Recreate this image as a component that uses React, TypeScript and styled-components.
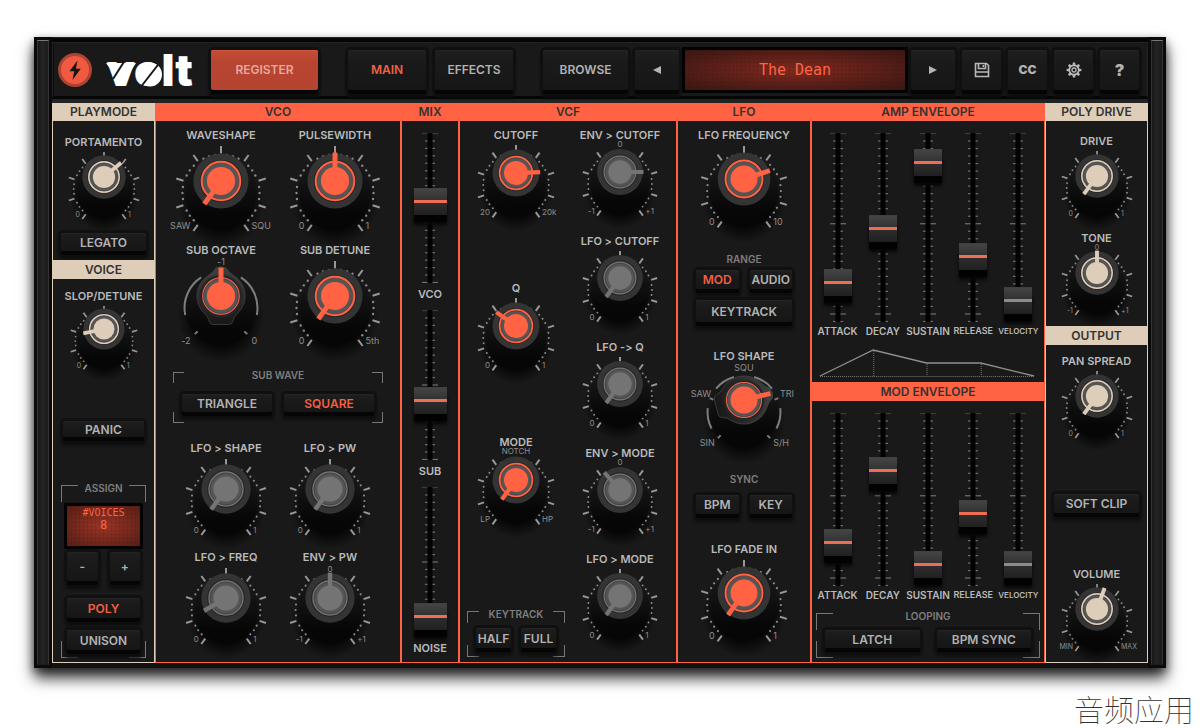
import React, { useId, useState } from 'react';
import styled, { createGlobalStyle } from 'styled-components';

const ORANGE = '#ff6344';
const CREAM = '#decdb9';
const GREY = '#747474';
const SURFACE = '#191919';

const GlobalStyle = createGlobalStyle`
  *, *::before, *::after { box-sizing: border-box; }
  body { margin: 0; background: #fff; font-family: Inter, "Liberation Sans", sans-serif; font-feature-settings: "calt" 0; }
  button, input, output { font-family: inherit; }
`;

/* ---------- page and frame ---------- */

const Page = styled.div`
  padding: 37px 34px 0;
`;

const Frame = styled.main`
  display: grid;
  grid-template-columns: 18px minmax(0, 1fr) 18px;
  background: #0a0a0a;
  box-shadow: 0 10px 14px 0 rgba(0, 0, 0, 0.8), 0 3px 8px rgba(0, 0, 0, 0.4);
`;

const Rail = styled.div`
  margin: 3px;
  border: 1px solid #343434;
  border-top-color: #777;
  border-bottom-color: #1c1c1c;
  background: linear-gradient(90deg, #171717, #242424 45%, #1b1b1b);
`;

const Body = styled.div`
  padding: 5px 0;
  background: linear-gradient(#222 0 1px, #050505 1px 5px, #232323 5px 66px, #111 66px);
`;

const Toolbar = styled.header`
  display: flex;
  align-items: center;
  gap: 30px;
  height: 57px;
  padding: 7px 8px 7px 5px;
  border: 1px solid #232323;
  border-bottom: 3px solid #060606;
  background: #191919;
  box-shadow: inset 1px 0 0 #0a0a0a;
`;

const ToolGroup = styled.div<{ $grow?: boolean }>`
  display: flex;
  gap: ${p => (p.$grow ? 7 : 9)}px;
  flex: ${p => (p.$grow ? '1 1 0' : 'none')};
  min-width: 0;
`;

const Brand = styled.h1`
  display: flex;
  align-items: center;
  gap: 14px;
  flex: none;
  width: 123px;
  margin: 0;
  > svg { flex: none; }
`;

const Panels = styled.div`
  display: grid;
  grid-template-columns: 103fr 246fr 58fr 218fr 134fr 234fr 103fr;
  margin-top: 4px;
`;

const Panel = styled.section<{ $accent: string }>`
  display: flex;
  flex-direction: column;
  min-width: 0;
  padding-bottom: 4px;
  border: solid ${p => p.$accent};
  border-width: 0 1px 1px;
  background: ${SURFACE};
`;

const Title = styled.h2<{ $accent: string; $sub?: boolean; $mt?: number }>`
  margin: ${p => p.$mt ?? 0}px 0 0;
  height: ${p => (p.$sub ? 19 : 18)}px;
  line-height: ${p => (p.$sub ? 19 : 18)}px;
  text-align: center;
  white-space: nowrap;
  font-size: 12px;
  font-weight: 600;
  color: #333;
  background: ${p => p.$accent};
`;

const Pair = styled.div<{ $cell: number; $mt?: number }>`
  display: grid;
  grid-template-columns: repeat(2, ${p => p.$cell}px);
  justify-content: center;
  margin-top: ${p => p.$mt ?? 0}px;
`;

const Column = styled.div<{ $gap?: number; $pt?: number }>`
  display: flex;
  flex-direction: column;
  gap: ${p => p.$gap ?? 0}px;
  padding-top: ${p => p.$pt ?? 0}px;
`;

const ButtonRow = styled.div<{ $gap: number; $mt?: number; $mx?: number }>`
  display: grid;
  grid-auto-flow: column;
  grid-auto-columns: minmax(0, 1fr);
  gap: ${p => p.$gap}px;
  margin: ${p => p.$mt ?? 0}px ${p => p.$mx ?? 0}px 0;
`;

/* ---------- buttons and displays ---------- */

const Button = styled.button<{
  $h?: number; $w?: number; $mt?: number; $mx?: number; $on?: boolean; $fill?: boolean;
}>`
  display: flex;
  align-items: center;
  justify-content: center;
  flex: none;
  width: ${p => (p.$w ? `${p.$w}px` : 'auto')};
  height: ${p => p.$h ?? 18}px;
  margin: ${p => p.$mt ?? 0}px ${p => p.$mx ?? 0}px 0;
  padding: 0;
  border: 0;
  border-radius: 2px;
  white-space: nowrap;
  font-size: 12px;
  font-weight: 600;
  color: ${p => (p.$fill ? '#e5aa9f' : p.$on ? '#f45f42' : '#b2b2b2')};
  background: ${p => (p.$fill
    ? 'linear-gradient(#c54c36, #b84531 30%, #b44330)'
    : 'linear-gradient(#1f1f1f, #1a1a1a 35%, #161616)')};
  box-shadow:
    inset 0 1px 0 ${p => (p.$fill ? '#d0573f' : '#242424')},
    0 4px 0 0 #050505,
    0 0 0 3px #101010,
    0 6px 3px 2px #0e0e0e;
  cursor: pointer;
`;

const Lcd = styled.output<{ $small?: boolean }>`
  display: flex;
  flex-direction: column;
  align-items: center;
  justify-content: ${p => (p.$small ? 'flex-start' : 'center')};
  flex: 1 1 auto;
  min-width: 0;
  height: 46px;
  margin: ${p => (p.$small ? '9px -3px 0' : '-3px -4px')};
  overflow: hidden;
  border: 3px solid #030303;
  border-radius: 1px;
  font-family: "DejaVu Sans Mono", "Liberation Mono", monospace;
  font-size: ${p => (p.$small ? 12 : 15)}px;
  line-height: ${p => (p.$small ? 13 : 18)}px;
  color: ${ORANGE};
  background:
    repeating-linear-gradient(90deg, rgba(0, 0, 0, 0.06) 0 1px, transparent 1px 4px),
    repeating-linear-gradient(rgba(0, 0, 0, 0.06) 0 1px, transparent 1px 4px),
    radial-gradient(ellipse at center, ${p => (p.$small ? '#9a3524, #571e15' : '#802a20, #3a1611')});
`;

const LcdLine = styled.span<{ $minor?: boolean }>`
  font-size: ${p => (p.$minor ? 10 : 12)}px;
`;

const Group = styled.div<{ $c: number; $mt?: number; $mx: number; $px: number; $pb: number }>`
  --c: ${p => p.$c}px;
  --line: linear-gradient(#777, #777);
  display: flex;
  flex-direction: column;
  margin: ${p => p.$mt ?? 0}px ${p => p.$mx}px 0;
  padding: 0 ${p => p.$px}px ${p => p.$pb}px;
  background:
    var(--line) left top / var(--c) 1px, var(--line) right top / var(--c) 1px,
    var(--line) left bottom / var(--c) 1px, var(--line) right bottom / var(--c) 1px,
    var(--line) left top / 1px var(--c), var(--line) right top / 1px var(--c),
    var(--line) left bottom / 1px var(--c), var(--line) right bottom / 1px var(--c);
  background-repeat: no-repeat;
`;

const Caption = styled.div<{ $mt?: number }>`
  margin-top: ${p => p.$mt ?? -3}px;
  line-height: 12px;
  text-align: center;
  white-space: nowrap;
  font-size: 10px;
  font-weight: 600;
  color: #7f7f7f;
`;

/* ---------- knobs ---------- */

const ControlLabel = styled.label<{ $size?: number }>`
  display: block;
  line-height: 16px;
  text-align: center;
  white-space: nowrap;
  font-size: ${p => p.$size ?? 11}px;
  font-weight: 600;
  color: #bababa;
`;

const KnobBox = styled.div<{ $mt?: number; $large: boolean }>`
  display: flex;
  flex-direction: column;
  align-items: center;
  gap: ${p => (p.$large ? 3 : 2)}px;
  margin-top: ${p => p.$mt ?? 0}px;
`;

const Layers = styled.div`
  display: grid;
  justify-items: center;
  > * { grid-area: 1 / 1; }
`;

const Dial = styled.svg`
  display: block;
  overflow: visible;
  text { font-family: Inter, "Liberation Sans", sans-serif; font-weight: 400; fill: #8e8e8e; }
`;

const DialInput = styled.input`
  width: 100%;
  height: 100%;
  margin: 0;
  opacity: 0;
  cursor: grab;
`;

const at = (r: number, deg: number) => {
  const a = (deg * Math.PI) / 180;
  return [r * Math.sin(a), -r * Math.cos(a)] as const;
};

const arc = (r: number, from: number, to: number) => {
  const [x1, y1] = at(r, from);
  const [x2, y2] = at(r, to);
  return `M${x1} ${y1}A${r} ${r} 0 0 1 ${x2} ${y2}`;
};

const SWEEP = 144;
const LIFT = 12;

type KnobProps = {
  label: string; r: number; angle: number; color?: string; mt?: number;
  min?: string; max?: string; top?: string; upperLeft?: string; upperRight?: string;
  selector?: 'three' | 'five';
};

function Scale({ r, hideTop }: { r: number; hideTop: boolean }) {
  const marks = [];
  for (let i = -16; i <= 16; i++) {
    const deg = i * 9;
    if (i % 4 === 0) {
      if (i === 0 && hideTop) continue;
      const [x1, y1] = at(r, deg);
      const [x2, y2] = at(r * 0.84, deg);
      marks.push(<line key={i} x1={x1} y1={y1} x2={x2} y2={y2} stroke="#979797" strokeWidth={r > 38 ? 2 : 1.7} />);
    } else {
      const [cx, cy] = at(r * 0.82, deg);
      marks.push(<circle key={i} cx={cx} cy={cy} r={r * 0.025} fill="#8a8a8a" />);
    }
  }
  return <g>{marks}</g>;
}

function SelectorScale({ kind }: { kind: 'three' | 'five' }) {
  const arcs = kind === 'three'
    ? [[-101, -33], [33, 101]]
    : [[-117, -84], [-50, -16], [16, 50], [84, 117]];
  const stops = kind === 'three' ? [-135, 135] : [-135, -68, 68, 135];
  return (
    <g stroke="#7d7d7d" strokeWidth="2" fill="none">
      {arcs.map(([a, b]) => <path key={a} d={arc(36.5, a, b)} />)}
      {stops.map(s => {
        const [x1, y1] = at(33, s);
        const [x2, y2] = at(37, s);
        return <line key={s} x1={x1} y1={y1} x2={x2} y2={y2} />;
      })}
    </g>
  );
}

function Knob({ label, r, angle, color = ORANGE, mt, min, max, top, upperLeft, upperRight, selector }: KnobProps) {
  const id = useId();
  const [value, setValue] = useState(Math.round(((angle + SWEEP) / (2 * SWEEP)) * 1000));
  const turn = (value / 1000) * 2 * SWEEP - SWEEP;
  const grey = color === GREY;
  const cap = r * 0.587;
  const large = r >= 42;
  const font = r >= 45 ? 9 : r >= 39 ? 8 : 7;
  return (
    <KnobBox $mt={mt} $large={large}>
      <ControlLabel htmlFor={id}>{label}</ControlLabel>
      <Layers>
        <Dial width={2 * r} height={2 * r} viewBox={`${-r} ${-r} ${2 * r} ${2 * r}`} aria-hidden="true">
          <ellipse cx="0" cy={r * 0.2} rx={r * 0.92} ry={r * 0.95} fill="url(#knob-shadow)" />
          <circle cx="0" cy={r * 0.04} r={r * 0.75} fill="url(#knob-body)" />
          {selector ? <SelectorScale kind={selector} /> : <Scale r={r} hideTop={!!top} />}
          <g transform={`translate(0 ${-LIFT})`}>
            {selector ? (
              <g transform={`rotate(${turn})`}>
                <path
                  d="M-5-28Q0-30.500 5-28Q8-23 13-20.200A24 24 0 0 1 16.500 17.500Q13 20 12 25Q11 28.500 8 28.500H-8Q-11 28.500-12 25Q-13 20-16.500 17.500A24 24 0 0 1-13-20.200Q-8-23-5-28Z"
                  fill="url(#knob-lobe)" stroke="#474747" strokeWidth=".7"
                />
              </g>
            ) : (
              <circle r={cap} fill="#343434" />
            )}
            <circle r={cap * 0.77} fill="#262626" />
            <circle
              r={cap * (selector ? 0.66 : 0.69)} fill="#555"
              stroke={color} strokeWidth={selector ? 1.2 : grey ? 1.4 : cap * 0.09}
            />
            <circle r={cap * (selector ? 0.63 : 0.65)} fill="none" stroke="#383838" strokeWidth="0.6" />
            <circle r={cap * 0.51} fill={color} />
            <rect
              x={-cap * 0.09} y={-cap * 1.03} width={cap * 0.18} height={cap * 0.8}
              fill={color} transform={`rotate(${turn})`}
            />
          </g>
          {top && <text x="0" y={-r + font * 0.36 + (large ? 1 : -1)} fontSize={font} textAnchor="middle">{top}</text>}
          {min && <text x={-r * 0.65} y={r * 0.69 + font * 0.36} fontSize={font} textAnchor="end">{min}</text>}
          {max && <text x={r * 0.65} y={r * 0.69 + font * 0.36} fontSize={font} textAnchor="start">{max}</text>}
          {upperLeft && <text x={-r * 0.73} y={-r * 0.39 + 3} fontSize={font} textAnchor="end">{upperLeft}</text>}
          {upperRight && <text x={r * 0.8} y={-r * 0.39 + 3} fontSize={font} textAnchor="start">{upperRight}</text>}
        </Dial>
        <DialInput id={id} type="range" min="0" max="1000" value={value} onChange={e => setValue(+e.target.value)} />
      </Layers>
    </KnobBox>
  );
}

/* ---------- faders ---------- */

const FaderBox = styled.div<{ $gap: number }>`
  display: flex;
  flex-direction: column;
  align-items: center;
  gap: ${p => p.$gap}px;
  min-width: 0;
`;

const FaderInput = styled.input<{ $line: string; $w: number; $h: number }>`
  appearance: none;
  writing-mode: vertical-lr;
  direction: rtl;
  width: ${p => p.$w}px;
  height: ${p => p.$h}px;
  margin: 0;
  background: transparent;
  cursor: ns-resize;

  &::-webkit-slider-thumb {
    appearance: none;
    width: ${p => p.$w}px;
    height: 27px;
    border: 0;
    border-radius: 0;
    background: linear-gradient(
      #3c3c3c 0, #444 1px, #333 12px,
      ${p => p.$line} 12px 15px,
      #2d2d2d 15px, #202020 27px
    );
    box-shadow: 0 7px 0 0 #020202, 0 10px 3px 0 #070707;
  }
`;

const FaderRow = styled.div`
  display: grid;
  grid-template-columns: repeat(5, minmax(0, 1fr));
  padding: 12px 3px 0;
`;

type FaderProps = {
  label: string; value: number; height: number; steps: number; major: number;
  width?: number; muted?: boolean; size?: number; gap?: number;
};

function Fader({ label, value, height, steps, major, width = 28, muted, size, gap = 1 }: FaderProps) {
  const id = useId();
  const [v, setV] = useState(value);
  return (
    <FaderBox $gap={gap}>
      <Layers>
        <svg width="16" height={height} aria-hidden="true">
          {Array.from({ length: steps + 1 }, (_, i) => {
            const y = 0.5 + (i * (height - 1)) / steps;
            const half = i % major === 0 ? 8 : 5;
            return <line key={i} x1={8 - half} x2={8 + half} y1={y} y2={y} stroke={i ? '#707070' : '#3c3c3c'} strokeWidth="1.2" />;
          })}
          <rect x="5.5" y="0" width="5" height={height} fill="#020202" />
        </svg>
        <FaderInput
          id={id} type="range" min="0" max="1000" value={v} $w={width} $h={height}
          $line={muted ? '#8b8b8b' : '#ee6d53'} onChange={e => setV(+e.target.value)}
        />
      </Layers>
      <ControlLabel htmlFor={id} $size={size}>{label}</ControlLabel>
    </FaderBox>
  );
}

const Curve = styled.svg`
  display: block;
  width: auto;
  height: 30px;
  margin: 9px 10px 4px 8px;
  overflow: visible;
`;

const Footer = styled.p`
  margin: 22px -28px 0 0;
  text-align: right;
  line-height: 36px;
  font-family: "Noto Sans CJK SC", sans-serif;
  font-size: 30px;
  font-weight: 100;
  color: #333;
`;

/* ---------- drawings ---------- */

const HiddenSvg = styled.svg`
  position: absolute;
`;

const Paints = () => (
  <HiddenSvg width="0" height="0" aria-hidden="true">
    <defs>
      <radialGradient id="knob-shadow">
        <stop offset="0.6" stopColor="#050505" />
        <stop offset="1" stopColor="#050505" stopOpacity="0" />
      </radialGradient>
      <linearGradient id="knob-body" x1="0" y1="0" x2="0" y2="1">
        <stop offset="0.2" stopColor="#161616" />
        <stop offset="0.75" stopColor="#070707" />
        <stop offset="1" stopColor="#050505" />
      </linearGradient>
      <linearGradient id="knob-lobe" x1="0" y1="0" x2="0" y2="1">
        <stop offset="0" stopColor="#404040" />
        <stop offset="0.6" stopColor="#282828" />
        <stop offset="1" stopColor="#181818" />
      </linearGradient>
    </defs>
  </HiddenSvg>
);

const Bolt = () => (
  <svg width="34" height="34" viewBox="0 0 34 34" aria-hidden="true">
    <circle cx="17" cy="17" r="17" fill="#ad4433" />
    <circle cx="17" cy="17" r="14" fill="#ef5a40" />
    <path d="M19.500 7.500 11.500 18.200h4.700l-1.700 8.800 8.200-11.300h-4.800l1.600-8.200Z" fill="#161616" />
  </svg>
);

const Wordmark = () => (
  <svg width="88" height="36" viewBox="0 0 88 36" overflow="visible" role="img" aria-label="volt">
    <text x="1" y="34" fontFamily="Inter, sans-serif" fontWeight="900" fontSize="44" fill="#fff">volt</text>
    <path d="M0 11H30L16 33Z" fill="#fff" />
    <circle cx="44" cy="22.500" r="12" fill="#fff" />
    <path d="M18.500 9 7 27M55 9 34 36" stroke="#191919" strokeWidth="2" />
  </svg>
);

const Disk = () => (
  <svg width="16" height="16" viewBox="0 0 16 16" fill="none" stroke="#b8b8b8" strokeWidth="1.6" aria-hidden="true">
    <path d="M1.500 1.500H12.500L14.500 3.500V14.500H1.500Z" />
    <path d="M4.500 1.500V6.500H11.500V1.500M9.300 3V5M2 10H14" />
  </svg>
);

const Gear = () => (
  <svg width="16" height="16" viewBox="-8 -8 16 16" fill="none" stroke="#b8b8b8" aria-hidden="true">
    {[0, 45, 90, 135, 180, 225, 270, 315].map(a => (
      <path key={a} d="M-1.600-4.500-1.100-7.400H1.100L1.600-4.500Z" fill="#b8b8b8" stroke="none" transform={`rotate(${a})`} />
    ))}
    <circle r="4.700" strokeWidth="1.700" />
    <circle r="2" strokeWidth="1.300" />
  </svg>
);

const Arrow = ({ back }: { back?: boolean }) => (
  <svg width="10" height="10" viewBox="0 0 10 10" aria-hidden="true">
    <path d={back ? 'M9 1V9L1 5Z' : 'M1 1V9L9 5Z'} fill="#b4b4b4" />
  </svg>
);

const Glyph = styled.span<{ $size: number }>`
  font-size: ${p => p.$size}px;
  font-weight: 900;
`;

function EnvelopeFaders({ height, steps, major, values }: {
  height: number; steps: number; major: number; values: number[];
}) {
  const names: [string, number][] = [['ATTACK', 10], ['DECAY', 10], ['SUSTAIN', 10], ['RELEASE', 9], ['VELOCITY', 8]];
  return (
    <FaderRow>
      {names.map(([name, size], i) => (
        <Fader
          key={name} label={name} size={size} value={values[i]} height={height}
          steps={steps} major={major} muted={i === 4}
        />
      ))}
    </FaderRow>
  );
}

/* ---------- application ---------- */

export default function App() {
  return (
    <Page>
      <GlobalStyle />
      <Paints />
      <Frame>
        <Rail />
        <Body>
          <Toolbar>
            <Brand><Bolt /><Wordmark /></Brand>
            <ToolGroup>
              <Button $h={40} $w={107} $fill>REGISTER</Button>
            </ToolGroup>
            <ToolGroup>
              <Button $h={40} $w={78} $on>MAIN</Button>
              <Button $h={40} $w={78}>EFFECTS</Button>
            </ToolGroup>
            <ToolGroup $grow>
              <Button $h={40} $w={85}>BROWSE</Button>
              <Button $h={40} $w={44} aria-label="Previous preset"><Arrow back /></Button>
              <Lcd>The Dean</Lcd>
              <Button $h={40} $w={44} aria-label="Next preset"><Arrow /></Button>
              <Button $h={40} $w={39} aria-label="Save"><Disk /></Button>
              <Button $h={40} $w={39}><Glyph $size={12}>CC</Glyph></Button>
              <Button $h={40} $w={39} aria-label="Settings"><Gear /></Button>
              <Button $h={40} $w={39}><Glyph $size={16}>?</Glyph></Button>
            </ToolGroup>
          </Toolbar>

          <Panels>
            <Panel $accent={CREAM}>
              <Title $accent={CREAM}>PLAYMODE</Title>
              <Knob label="PORTAMENTO" r={37} angle={50} color={CREAM} mt={13} min="0" max="1" />
              <Button $mt={7} $mx={8}>LEGATO</Button>
              <Title $accent={CREAM} $sub $mt={9}>VOICE</Title>
              <Knob label="SLOP/DETUNE" r={35} angle={-102} color={CREAM} mt={9} min="0" max="1" />
              <Button $h={16} $mt={45} $mx={10}>PANIC</Button>
              <Group $c={17} $mt={48} $mx={8} $px={6} $pb={8} role="group" aria-label="Assign">
                <Caption>ASSIGN</Caption>
                <Lcd $small>
                  <LcdLine $minor>#VOICES</LcdLine>
                  <LcdLine>8</LcdLine>
                </Lcd>
                <ButtonRow $gap={12} $mt={3}>
                  <Button $h={29}>-</Button>
                  <Button $h={29}>+</Button>
                </ButtonRow>
                <Button $h={20} $mt={17} $on>POLY</Button>
                <Button $h={20} $mt={12}>UNISON</Button>
              </Group>
            </Panel>

            <Panel $accent={ORANGE}>
              <Title $accent={ORANGE}>VCO</Title>
              <Pair $cell={114} $mt={6}>
                <Knob label="WAVESHAPE" r={47} angle={-144} min="SAW" max="SQU" />
                <Knob label="PULSEWIDTH" r={47} angle={0} min="0" max="1" />
              </Pair>
              <Pair $cell={114} $mt={2}>
                <Knob label="SUB OCTAVE" r={47} angle={0} top="-1" min="-2" max="0" selector="three" />
                <Knob label="SUB DETUNE" r={47} angle={-144} min="0" max="5th" />
              </Pair>
              <Group $c={11} $mt={17} $mx={17} $px={9} $pb={11} role="group" aria-label="Sub wave">
                <Caption>SUB WAVE</Caption>
                <ButtonRow $gap={12} $mt={13}>
                  <Button>TRIANGLE</Button>
                  <Button $on>SQUARE</Button>
                </ButtonRow>
              </Group>
              <Pair $cell={104} $mt={17}>
                <Knob label="LFO &gt; SHAPE" r={42} angle={-144} color={GREY} min="0" max="1" />
                <Knob label="LFO &gt; PW" r={42} angle={-144} color={GREY} min="0" max="1" />
              </Pair>
              <Pair $cell={104} $mt={6}>
                <Knob label="LFO &gt; FREQ" r={42} angle={-120} color={GREY} min="0" max="1" />
                <Knob label="ENV &gt; PW" r={42} angle={0} color={GREY} top="0" min="-1" max="+1" />
              </Pair>
            </Panel>

            <Panel $accent={ORANGE}>
              <Title $accent={ORANGE}>MIX</Title>
              <Column $gap={8} $pt={12}>
                <Fader label="VCO" value={554} height={150} steps={20} major={10} width={33} gap={3} />
                <Fader label="SUB" value={376} height={150} steps={20} major={10} width={33} gap={3} />
                <Fader label="NOISE" value={55} height={150} steps={20} major={10} width={33} gap={3} />
              </Column>
            </Panel>

            <Panel $accent={ORANGE}>
              <Title $accent={ORANGE}>VCF</Title>
              <Pair $cell={104} $mt={6}>
                <Column>
                  <Knob label="CUTOFF" r={40} angle={88} min="20" max="20k" />
                  <Knob label="Q" r={40} angle={-55} mt={55} min="0" max="1" />
                  <Knob label="MODE" r={40} angle={-144} mt={56} top="NOTCH" min="LP" max="HP" />
                  <Group $c={12} $mt={79} $mx={3} $px={9} $pb={9} role="group" aria-label="Keytrack">
                    <Caption>KEYTRACK</Caption>
                    <ButtonRow $gap={10} $mt={8}>
                      <Button $h={20}>HALF</Button>
                      <Button $h={20}>FULL</Button>
                    </ButtonRow>
                  </Group>
                </Column>
                <Column $gap={10}>
                  <Knob label="ENV &gt; CUTOFF" r={39} angle={90} color={GREY} top="0" min="-1" max="+1" />
                  <Knob label="LFO &gt; CUTOFF" r={39} angle={-144} color={GREY} min="0" max="1" />
                  <Knob label="LFO -&gt; Q" r={39} angle={-144} color={GREY} min="0" max="1" />
                  <Knob label="ENV &gt; MODE" r={39} angle={-42} color={GREY} top="0" min="-1" max="+1" />
                  <Knob label="LFO &gt; MODE" r={39} angle={-144} color={GREY} min="0" max="1" />
                </Column>
              </Pair>
            </Panel>

            <Panel $accent={ORANGE}>
              <Title $accent={ORANGE}>LFO</Title>
              <Knob label="LFO FREQUENCY" r={45} angle={72} mt={6} min="0" max="10" />
              <Caption $mt={17}>RANGE</Caption>
              <ButtonRow $gap={11} $mt={5} $mx={18}>
                <Button $h={19} $on>MOD</Button>
                <Button $h={19}>AUDIO</Button>
              </ButtonRow>
              <Button $h={22} $mt={11} $mx={18}>KEYTRACK</Button>
              <Knob
                label="LFO SHAPE" r={45} angle={76} mt={26} top="SQU" min="SIN" max="S/H"
                upperLeft="SAW" upperRight="TRI" selector="five"
              />
              <Caption $mt={16}>SYNC</Caption>
              <ButtonRow $gap={11} $mt={10} $mx={18}>
                <Button $h={19}>BPM</Button>
                <Button $h={19}>KEY</Button>
              </ButtonRow>
              <Knob label="LFO FADE IN" r={45} angle={-144} mt={27} min="0" max="1" />
            </Panel>

            <Panel $accent={ORANGE}>
              <Title $accent={ORANGE}>AMP ENVELOPE</Title>
              <EnvelopeFaders height={189} steps={25} major={12} values={[162, 494, 901, 324, 50]} />
              <Curve viewBox="0 0 213 30" preserveAspectRatio="none" fill="none" aria-hidden="true">
                <path d="M0 28 53 2 106 15H160L213 28" stroke="#8f8f8f" strokeWidth="1.300" />
                <path d="M0 28.500H213M53.500 3V28M106.500 16V28M160.500 16V28" stroke="#777" strokeDasharray="1 1" />
              </Curve>
              <Title $accent={ORANGE} $sub>MOD ENVELOPE</Title>
              <EnvelopeFaders height={173} steps={23} major={11} values={[209, 702, 56, 401, 56]} />
              <Group $c={17} $mt={10} $mx={4} $px={9} $pb={10} role="group" aria-label="Looping">
                <Caption>LOOPING</Caption>
                <ButtonRow $gap={17} $mt={8}>
                  <Button>LATCH</Button>
                  <Button>BPM SYNC</Button>
                </ButtonRow>
              </Group>
            </Panel>

            <Panel $accent={CREAM}>
              <Title $accent={CREAM}>POLY DRIVE</Title>
              <Knob label="DRIVE" r={37} angle={-144} color={CREAM} mt={12} min="0" max="1" />
              <Knob label="TONE" r={37} angle={0} color={CREAM} mt={5} top="0" min="-1" max="+1" />
              <Title $accent={CREAM} $sub $mt={4}>OUTPUT</Title>
              <Knob label="PAN SPREAD" r={37} angle={-144} color={CREAM} mt={8} min="0" max="1" />
              <Button $h={19} $mt={49} $mx={8}>SOFT CLIP</Button>
              <Knob label="VOLUME" r={37} angle={20} color={CREAM} mt={53} min="MIN" max="MAX" />
            </Panel>
          </Panels>
        </Body>
        <Rail />
      </Frame>
      <Footer>音频应用</Footer>
    </Page>
  );
}
